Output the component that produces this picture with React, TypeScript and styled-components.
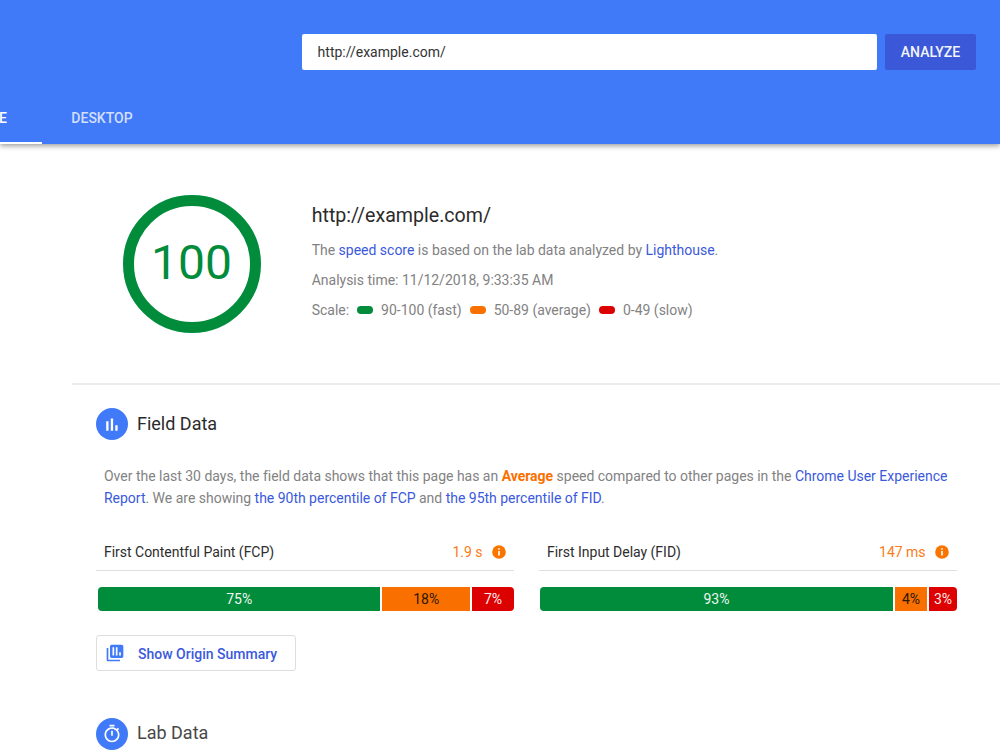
import React from "react";
import styled, { createGlobalStyle } from "styled-components";

const GlobalStyle = createGlobalStyle`
  *, *::before, *::after { box-sizing: border-box; }
  body {
    margin: 0;
    background: #fff;
    font-family: Roboto, "Liberation Sans", sans-serif;
    font-size: 14px;
    color: #212121;
  }
  h1, h2, p { margin: 0; font-weight: 400; }
`;

const Page = styled.div`
  width: 1000px;
  height: 750px;
  overflow: hidden;
  background: #fff;
`;

const Header = styled.header`
  position: relative;
  display: flex;
  flex-direction: column;
  justify-content: space-between;
  height: 144px;
  padding-top: 34px;
  background: #417af8;
  box-shadow: 0 2px 5px rgba(0, 0, 0, 0.38);
`;

const SearchRow = styled.div`
  display: flex;
  gap: 8px;
  height: 36px;
  padding: 0 24px 0 302px;
`;

const UrlInput = styled.input`
  flex: 1;
  min-width: 0;
  padding: 0 15.6px;
  border: 0;
  border-radius: 2px;
  outline: 0;
  background: #fff;
  color: #333;
  font: 400 14px Roboto, sans-serif;
`;

const AnalyzeButton = styled.button`
  width: 91px;
  padding: 0;
  border: 0;
  border-radius: 2px;
  background: #3b58d8;
  color: #f3f5fd;
  font: 500 14px Roboto, sans-serif;
`;

const Tabs = styled.nav`
  display: flex;
  height: 50px;
`;

const Tab = styled.a<{ $active?: boolean; $width: number }>`
  display: flex;
  align-items: center;
  justify-content: ${(p) => (p.$active ? "flex-end" : "center")};
  width: ${(p) => p.$width}px;
  padding-right: ${(p) => (p.$active ? 35 : 0)}px;
  border-bottom: 2px solid ${(p) => (p.$active ? "#fff" : "transparent")};
  color: ${(p) => (p.$active ? "#fff" : "#d2dffd")};
  font-weight: 500;
  white-space: nowrap;
`;

const Summary = styled.section`
  display: flex;
  height: 239px;
  margin-left: 72px;
  padding: 51px 0 0 51px;
`;

const Gauge = styled.div`
  display: flex;
  align-items: center;
  justify-content: center;
  width: 138px;
  height: 138px;
  margin-right: 50.7px;
  padding: 0 1px 3px 0;
  border: 11px solid #018c3b;
  border-radius: 50%;
  color: #018c3b;
  font-size: 48px;
`;

const Details = styled.div`
  padding-top: 9px;
  color: #828282;
`;

const PageUrl = styled.h1`
  color: #2b2b2b;
  font-size: 19.6px;
  line-height: 24px;
  margin-bottom: 7px;
`;

const DetailLine = styled.p`
  display: flex;
  align-items: center;
  height: 30px;
  white-space: pre;
  letter-spacing: -0.01px;
`;

const Link = styled.a`
  color: #3a59dc;
`;

const ScaleDot = styled.i<{ $color: string }>`
  width: 16px;
  height: 8px;
  margin: 0 8px;
  border-radius: 4px;
  background: ${(p) => p.$color};
`;

const Divider = styled.hr`
  height: 2px;
  margin: 0 0 0 72px;
  border: 0;
  background: #ececec;
`;

const Section = styled.section`
  padding: 23px 43px 0 96px;
`;

const SectionHeading = styled.div`
  display: flex;
  align-items: center;
  gap: 9px;
  height: 32px;
`;

const SectionTitle = styled.h2<{ $color: string; $lift: number }>`
  padding-bottom: ${(p) => p.$lift}px;
  color: ${(p) => p.$color};
  font-size: 18px;
`;

const Badge = styled.div`
  display: flex;
  align-items: center;
  justify-content: center;
  width: 32px;
  height: 32px;
  border-radius: 50%;
  background: #417af8;
`;

const Description = styled.div`
  margin: 25px 0 0 8px;
  color: #828282;
  line-height: 22px;
`;

const DescriptionLine = styled.p`
  white-space: nowrap;
  letter-spacing: -0.014px;
`;

const Average = styled.b`
  color: #f97000;
  font-weight: 700;
`;

const Metrics = styled.div`
  display: flex;
  gap: 25px;
  margin-top: 24px;
`;

const Metric = styled.article`
  width: 418px;
`;

const MetricHeader = styled.div`
  display: flex;
  align-items: center;
  height: 38px;
  padding: 0 8.4px 0 8px;
  border-bottom: 1px solid #dedede;
`;

const MetricName = styled.span`
  flex: 1;
  color: #2d2d2d;
  letter-spacing: -0.02px;
`;

const MetricValue = styled.span`
  margin-right: 9px;
  color: #fb7c17;
`;

const Distribution = styled.div<{ $left: number }>`
  display: flex;
  gap: 2px;
  height: 24px;
  margin: 16px 0 0 ${(p) => p.$left}px;
  border-radius: 4px;
  overflow: hidden;
`;

const Portion = styled.div<{ $color: string; $text: string; $width: number }>`
  display: flex;
  align-items: center;
  justify-content: center;
  width: ${(p) => p.$width}px;
  background: ${(p) => p.$color};
  color: ${(p) => p.$text};
`;

const OriginButton = styled.button`
  display: flex;
  align-items: center;
  width: 200px;
  height: 36px;
  margin: 24px 0 47px;
  padding: 0 0 0 8px;
  gap: 13px;
  border: 1px solid #dedede;
  border-radius: 3px;
  background: #fff;
  color: #3a59dc;
  font: 500 14px Roboto, sans-serif;
`;

const OriginLabel = styled.span`
  padding-top: 2px;
`;

const BarsIcon = () => (
  <svg width="16" height="16" viewBox="0 0 16 16" fill="#fff">
    <path d="M2.2 5.3h2.3v9.4H2.2zM6.8 2.6h2.3v12.1H6.8zM11.3 9.3h2.3v5.4h-2.3z" />
  </svg>
);

const StopwatchIcon = () => (
  <svg width="20" height="20" viewBox="0 0 24 24" fill="#fff">
    <path d="M15 1H9v2h6V1zm-4 13h2V8h-2v6zm8.03-6.61l1.42-1.42c-.43-.51-.9-.99-1.41-1.41l-1.42 1.42C16.07 4.74 14.12 4 12 4c-4.97 0-9 4.03-9 9s4.02 9 9 9 9-4.03 9-9c0-2.12-.74-4.07-1.97-5.61zM12 20c-3.87 0-7-3.13-7-7s3.13-7 7-7 7 3.13 7 7-3.13 7-7 7z" />
  </svg>
);

const InfoIcon = () => (
  <svg width="14" height="14" viewBox="0 0 14 14">
    <circle cx="7" cy="7" r="6.8" fill="#fa7500" />
    <path d="M6.2 3.2h1.6v1.5H6.2zM6.2 6h1.6v4.4H6.2z" fill="#fff" />
  </svg>
);

const OriginIcon = () => (
  <svg width="20" height="20" viewBox="0 0 24 24" fill="#417af8">
    <path d="M4 6H2v14c0 1.1.9 2 2 2h14v-2H4V6z" />
    <path
      fillRule="evenodd"
      d="M20 2H8c-1.1 0-2 .9-2 2v12c0 1.1.9 2 2 2h12c1.1 0 2-.9 2-2V4c0-1.1-.9-2-2-2zM9 5h2v10H9zM13 5h2v10h-2zM17 11h2v4h-2z"
    />
  </svg>
);

const GREEN = "#018c3b";
const ORANGE = "#f97000";
const RED = "#dc0000";

type MetricData = {
  name: string;
  value: string;
  left: number;
  widths: [number, number, number];
  shares: [string, string, string];
};

const METRICS: MetricData[] = [
  { name: "First Contentful Paint (FCP)", value: "1.9 s", left: 2, widths: [283, 88, 42], shares: ["75%", "18%", "7%"] },
  { name: "First Input Delay (FID)", value: "147 ms", left: 1, widths: [353, 32, 28], shares: ["93%", "4%", "3%"] },
];

const MetricCard = ({ name, value, left, widths, shares }: MetricData) => (
  <Metric>
    <MetricHeader>
      <MetricName>{name}</MetricName>
      <MetricValue>{value}</MetricValue>
      <InfoIcon />
    </MetricHeader>
    <Distribution $left={left}>
      <Portion $color={GREEN} $text="#eef7f1" $width={widths[0]}>{shares[0]}</Portion>
      <Portion $color={ORANGE} $text="#2b1600" $width={widths[1]}>{shares[1]}</Portion>
      <Portion $color={RED} $text="#fdeaea" $width={widths[2]}>{shares[2]}</Portion>
    </Distribution>
  </Metric>
);

export default function App() {
  return (
    <>
      <GlobalStyle />
      <Page>
        <Header>
          <SearchRow>
            <UrlInput defaultValue="http://example.com/" />
            <AnalyzeButton>ANALYZE</AnalyzeButton>
          </SearchRow>
          <Tabs>
            <Tab $active $width={42}>E</Tab>
            <Tab $width={120}>DESKTOP</Tab>
          </Tabs>
        </Header>
        <Summary>
          <Gauge>100</Gauge>
          <Details>
            <PageUrl>http://example.com/</PageUrl>
            <DetailLine>
              The <Link>speed score</Link> is based on the lab data analyzed by <Link>Lighthouse</Link>.
            </DetailLine>
            <DetailLine>Analysis time: 11/12/2018, 9:33:35 AM</DetailLine>
            <DetailLine>
              Scale:
              <ScaleDot $color={GREEN} />
              90-100 (fast)
              <ScaleDot $color={ORANGE} />
              50-89 (average)
              <ScaleDot $color={RED} />
              0-49 (slow)
            </DetailLine>
          </Details>
        </Summary>
        <Divider />
        <Section>
          <SectionHeading>
            <Badge><BarsIcon /></Badge>
            <SectionTitle $color="#2b2b2b" $lift={2}>Field Data</SectionTitle>
          </SectionHeading>
          <Description>
            <DescriptionLine>
              Over the last 30 days, the field data shows that this page has an <Average>Average</Average> speed
              compared to other pages in the <Link>Chrome User Experience</Link>
            </DescriptionLine>
            <DescriptionLine>
              <Link>Report</Link>. We are showing <Link>the 90th percentile of FCP</Link> and{" "}
              <Link>the 95th percentile of FID</Link>.
            </DescriptionLine>
          </Description>
          <Metrics>
            {METRICS.map((m) => (
              <MetricCard key={m.name} {...m} />
            ))}
          </Metrics>
          <OriginButton>
            <OriginIcon />
            <OriginLabel>Show Origin Summary</OriginLabel>
          </OriginButton>
          <SectionHeading>
            <Badge><StopwatchIcon /></Badge>
            <SectionTitle $color="#484848" $lift={4}>Lab Data</SectionTitle>
          </SectionHeading>
        </Section>
      </Page>
    </>
  );
}
